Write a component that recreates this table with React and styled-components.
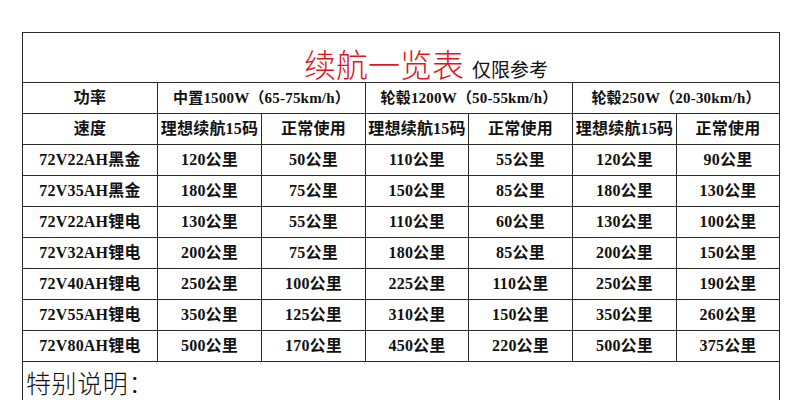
import styled, { createGlobalStyle } from "styled-components";

const GlobalStyle = createGlobalStyle`
  html, body {
    margin: 0;
    padding: 0;
    background: #fff;
  }
  body {
    font-family: "Liberation Serif", "Noto Sans CJK SC", serif;
  }
`;

const groups = [
  "中置1500W（65-75km/h）",
  "轮毂1200W（50-55km/h）",
  "轮毂250W（20-30km/h）",
];

const rows = [
  ["72V22AH黑金", 120, 50, 110, 55, 120, 90],
  ["72V35AH黑金", 180, 75, 150, 85, 180, 130],
  ["72V22AH锂电", 130, 55, 110, 60, 130, 100],
  ["72V32AH锂电", 200, 75, 180, 85, 200, 150],
  ["72V40AH锂电", 250, 100, 225, 110, 250, 190],
  ["72V55AH锂电", 350, 125, 310, 150, 350, 260],
  ["72V80AH锂电", 500, 170, 450, 220, 500, 375],
];

const widths = [135, 104, 104, 103, 104, 104, 103];

const App = () => {
  return (
    <Page>
      <GlobalStyle />
      <Table>
        <colgroup>
          {widths.map((w, i) => (
            <col key={i} style={{ width: w }} />
          ))}
        </colgroup>
        <tbody>
          <TitleRow>
            <TitleCell colSpan={7}>
              <Title>续航一览表</Title>
              <Note>仅限参考</Note>
            </TitleCell>
          </TitleRow>
          <Row>
            <Cell>功率</Cell>
            {groups.map((g) => (
              <Cell key={g} colSpan={2} $small>
                {g}
              </Cell>
            ))}
          </Row>
          <Row>
            <Cell>速度</Cell>
            {groups.map((g) => [
              <Cell key={g + "a"}>理想续航15码</Cell>,
              <Cell key={g + "b"}>正常使用</Cell>,
            ])}
          </Row>
          {rows.map(([name, ...vals]) => (
            <Row key={name}>
              <Cell>{name}</Cell>
              {vals.map((v, i) => (
                <Cell key={i}>{v}公里</Cell>
              ))}
            </Row>
          ))}
          <FootRow>
            <FootCell colSpan={7}>特别说明：</FootCell>
          </FootRow>
        </tbody>
      </Table>
    </Page>
  );
};

const Page = styled.div`
  width: 804px;
  height: 400px;
  overflow: hidden;
  padding: 32px 0 0 22px;
  box-sizing: border-box;
`;

const Table = styled.table`
  border-collapse: collapse;
  table-layout: fixed;
  width: 757px;
  color: #111;
`;

const Row = styled.tr`
  height: 31px;
`;

const TitleRow = styled.tr`
  height: 50px;
`;

const FootRow = styled.tr`
  height: 38px;
`;

const Cell = styled.td`
  border: 1px solid #2a2a2a;
  padding: 0;
  text-align: center;
  vertical-align: middle;
  font-family: "Liberation Serif", "Noto Sans CJK SC", serif;
  font-weight: 700;
  font-size: ${(p) => (p.$small ? "15px" : "16px")};
  line-height: 1;
  white-space: nowrap;
  letter-spacing: 0.2px;
`;

const TitleCell = styled.td`
  border: 1px solid #2a2a2a;
  padding: 0;
  text-align: center;
  vertical-align: bottom;
  white-space: nowrap;
  line-height: 1;
`;

const Title = styled.span`
  display: inline-block;
  font-family: "Noto Sans CJK SC", sans-serif;
  font-weight: 300;
  font-size: 32px;
  color: #e2141c;
  margin: 0 8px 3px 50px;
  vertical-align: bottom;
`;

const Note = styled.span`
  display: inline-block;
  font-family: "Noto Sans CJK SC", sans-serif;
  font-size: 19px;
  color: #111;
  margin-bottom: 4px;
  vertical-align: bottom;
`;

const FootCell = styled.td`
  border: 1px solid #2a2a2a;
  border-bottom: none;
  padding: 8px 0 2px 3px;
  vertical-align: top;
  font-family: "Noto Sans CJK SC", sans-serif;
  font-weight: 300;
  font-size: 25px;
  letter-spacing: 0.6px;
  line-height: 1;
  color: #111;
`;

export default App;
